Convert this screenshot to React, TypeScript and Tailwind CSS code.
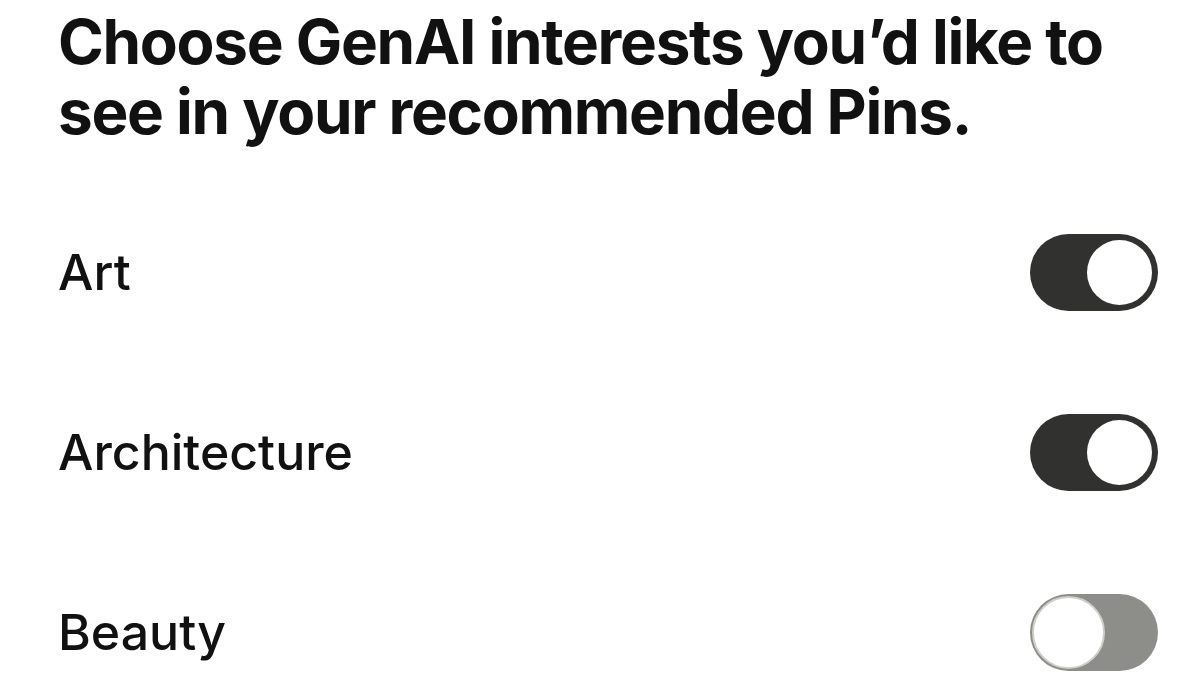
import React from "react";

function Toggle({ on }: { on: boolean }) {
  if (on) {
    return (
      <div className="flex h-[77px] w-[128px] shrink-0 items-center justify-end rounded-full bg-[#31312f] pr-[6px]">
        <div className="h-[65px] w-[65px] rounded-full bg-white" />
      </div>
    );
  }
  return (
    <div className="flex h-[77px] w-[128px] shrink-0 items-center justify-start rounded-full bg-[#8d8d89] pl-[2px]">
      <div className="h-[73px] w-[73px] rounded-full border-[2px] border-[#cfcfcc] bg-white" />
    </div>
  );
}

const items = [
  { label: "Art", on: true },
  { label: "Architecture", on: true },
  { label: "Beauty", on: false },
];

export default function App() {
  return (
    <div
      className="h-[675px] w-[1200px] overflow-hidden bg-white pl-[58px] pr-[42px] pt-[7px] text-[#111111]"
      style={{ fontFamily: "Inter, 'Noto Sans', sans-serif" }}
    >
      <h1 className="whitespace-nowrap text-[62px] font-bold leading-[70px] tracking-[-1.3px]">
        Choose GenAI interests you’d like to
        <br />
        see in your recommended Pins.
      </h1>
      <div className="mt-[35px] flex flex-col">
        {items.map((it) => (
          <div key={it.label} className="flex h-[180px] items-center justify-between">
            <span className="text-[50px] font-medium leading-none">{it.label}</span>
            <Toggle on={it.on} />
          </div>
        ))}
      </div>
    </div>
  );
}
